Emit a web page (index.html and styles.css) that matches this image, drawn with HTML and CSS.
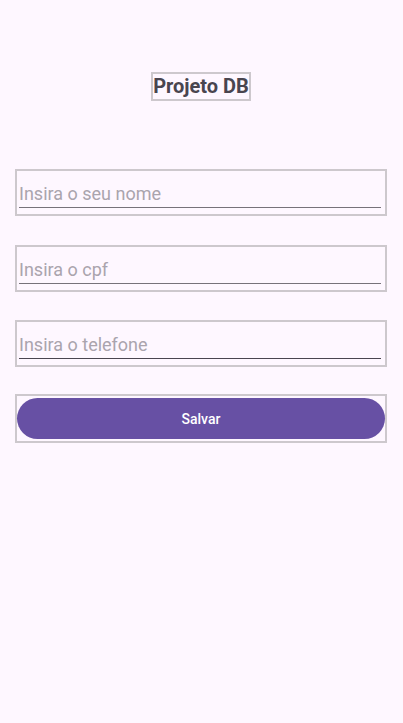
FILE: index.html
```html
<!DOCTYPE html>
<html lang="pt">
<head>
<meta charset="utf-8">
<title>Projeto DB</title>
<link rel="stylesheet" href="styles.css">
</head>
<body>
<main class="screen">
  <h1 class="title">Projeto DB</h1>
  <div class="form">
    <div class="field field-first"><div class="input">Insira o seu nome</div></div>
    <div class="field"><div class="input">Insira o cpf</div></div>
    <div class="field"><div class="input input-dark">Insira o telefone</div></div>
    <div class="field field-btn"><button class="btn">Salvar</button></div>
  </div>
</main>
</body>
</html>
```
FILE: styles.css
```css
* { box-sizing: border-box; }
html, body { margin: 0; padding: 0; }
body {
  background: #fef7ff;
  font-family: Roboto, "Noto Sans", sans-serif;
  width: 403px;
  height: 723px;
}
.screen {
  display: flex;
  flex-direction: column;
  align-items: center;
  padding: 72px 16px 0 15px;
}
.title {
  margin: 0 0 68px;
  border: 2px solid #cdc8cd;
  font-size: 20px;
  line-height: 25px;
  font-weight: 700;
  color: #49454f;
  padding: 0;
}
.form {
  width: 372px;
  display: flex;
  flex-direction: column;
  gap: 28px;
}
.field {
  border: 2px solid #cdc8cd;
  height: 47px;
  padding: 0 4px 0 2px;
}
.field-first { margin-bottom: 1px; }
.input {
  margin-top: 11px;
  height: 26px;
  border-bottom: 1px solid #77727a;
  font-size: 18px;
  line-height: 24px;
  color: #aaa4ad;
}
.input-dark { border-bottom-color: #4a4550; }
.field-btn {
  height: 49px;
  margin-top: -1px;
  padding: 2px 0;
}
.btn {
  display: block;
  width: 100%;
  height: 41px;
  margin: 0;
  border: none;
  border-radius: 21px;
  background: #6750a4;
  color: #ffffff;
  font-family: Roboto, sans-serif;
  font-size: 14px;
  font-weight: 500;
  padding: 0;
}
```
